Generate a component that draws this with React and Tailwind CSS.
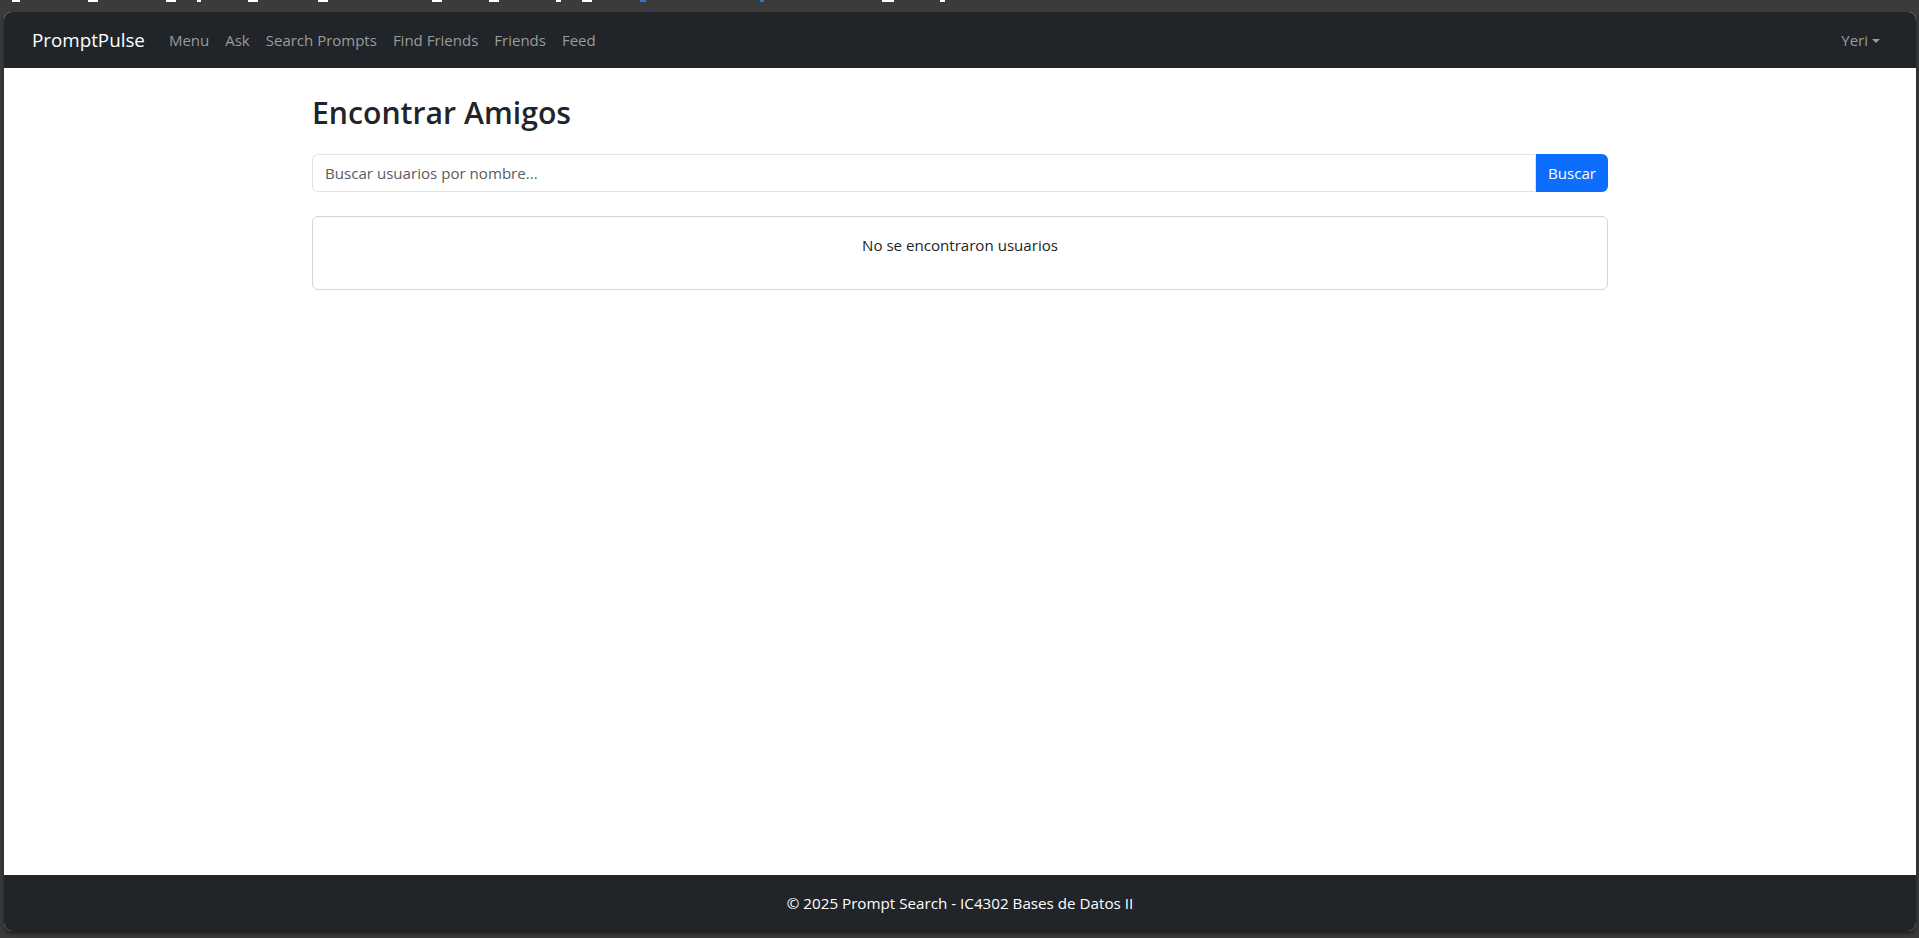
import React, { useState } from "react";

const links = ["Menu", "Ask", "Search Prompts", "Find Friends", "Friends", "Feed"];

// little bits of the desktop's thumbnails peeking above the window
const marks = [
  { left: 12, w: 8, c: "bg-white" },
  { left: 88, w: 10, c: "bg-white" },
  { left: 166, w: 10, c: "bg-white" },
  { left: 197, w: 4, c: "bg-white" },
  { left: 248, w: 10, c: "bg-white" },
  { left: 318, w: 10, c: "bg-white" },
  { left: 432, w: 10, c: "bg-white" },
  { left: 489, w: 10, c: "bg-white" },
  { left: 556, w: 5, c: "bg-white" },
  { left: 582, w: 10, c: "bg-white" },
  { left: 640, w: 6, c: "bg-[#1f7bd6]" },
  { left: 760, w: 4, c: "bg-[#1f7bd6]" },
  { left: 882, w: 12, c: "bg-white" },
  { left: 940, w: 5, c: "bg-white" },
];

const FindFriends = () => {
  const [query, setQuery] = useState("");

  return (
    <div
      className="relative h-[938px] w-full overflow-hidden bg-[#3b3b3b] pt-[12px] pl-[4px] pr-[3px] pb-[7px]"
      style={{ fontFamily: '"Open Sans", "Noto Sans", sans-serif' }}
    >
      {marks.map((m, i) => (
        <span
          key={i}
          className={`absolute top-0 h-[2px] ${m.c}`}
          style={{ left: m.left, width: m.w }}
        />
      ))}

      <div className="flex h-full flex-col overflow-hidden rounded-[8px] bg-white shadow-[0_3px_4px_rgba(0,0,0,0.45)]">
        {/* navbar */}
        <nav className="flex h-[56px] shrink-0 items-center justify-between bg-[#212529] px-[28px]">
          <div className="flex items-center">
            <a className="mr-[16px] text-[18.8px] leading-[30px] text-white">PromptPulse</a>
            <ul className="flex items-center">
              {links.map((l) => (
                <li key={l}>
                  <a className="block px-[8px] text-[15px] leading-[24px] text-[#9a9b9d]">{l}</a>
                </li>
              ))}
            </ul>
          </div>
          <a className="flex items-center px-[8px] text-[15px] leading-[24px] text-[#9a9b9d]">
            Yeri
            <span className="ml-[4px] mt-[1px] h-0 w-0 border-x-[4.5px] border-t-[4.5px] border-x-transparent border-t-[#9a9b9d]" />
          </a>
        </nav>

        {/* content */}
        <main className="flex-1 bg-white">
          <div className="mx-auto mt-[26px] w-[1296px]">
            <h2 className="mb-[22px] text-[30.2px] font-semibold leading-[38px] text-[#212529]">
              Encontrar Amigos
            </h2>

            <div className="mb-[24px] flex h-[38px]">
              <input
                value={query}
                onChange={(e) => setQuery(e.target.value)}
                placeholder="Buscar usuarios por nombre..."
                className="h-full flex-1 rounded-l-[6px] border border-[#dee2e6] px-[12px] text-[15.1px] text-[#212529] outline-none placeholder:text-[#595c5f]"
              />
              <button className="h-full rounded-r-[6px] bg-[#0d6efd] px-[12px] text-[15.1px] text-white">
                Buscar
              </button>
            </div>

            <div className="rounded-[6px] border border-[#d3d4d5] p-[16px] text-center">
              <p className="mb-[16px] text-[15.1px] leading-[24px] text-[#212529]">
                No se encontraron usuarios
              </p>
            </div>
          </div>
        </main>

        {/* footer */}
        <footer className="flex h-[56px] shrink-0 items-center justify-center bg-[#212529]">
          <p className="text-[15.2px] leading-[24px] text-white">
            © 2025 Prompt Search - IC4302 Bases de Datos II
          </p>
        </footer>
      </div>
    </div>
  );
};

export default function App() {
  return <FindFriends />;
}
